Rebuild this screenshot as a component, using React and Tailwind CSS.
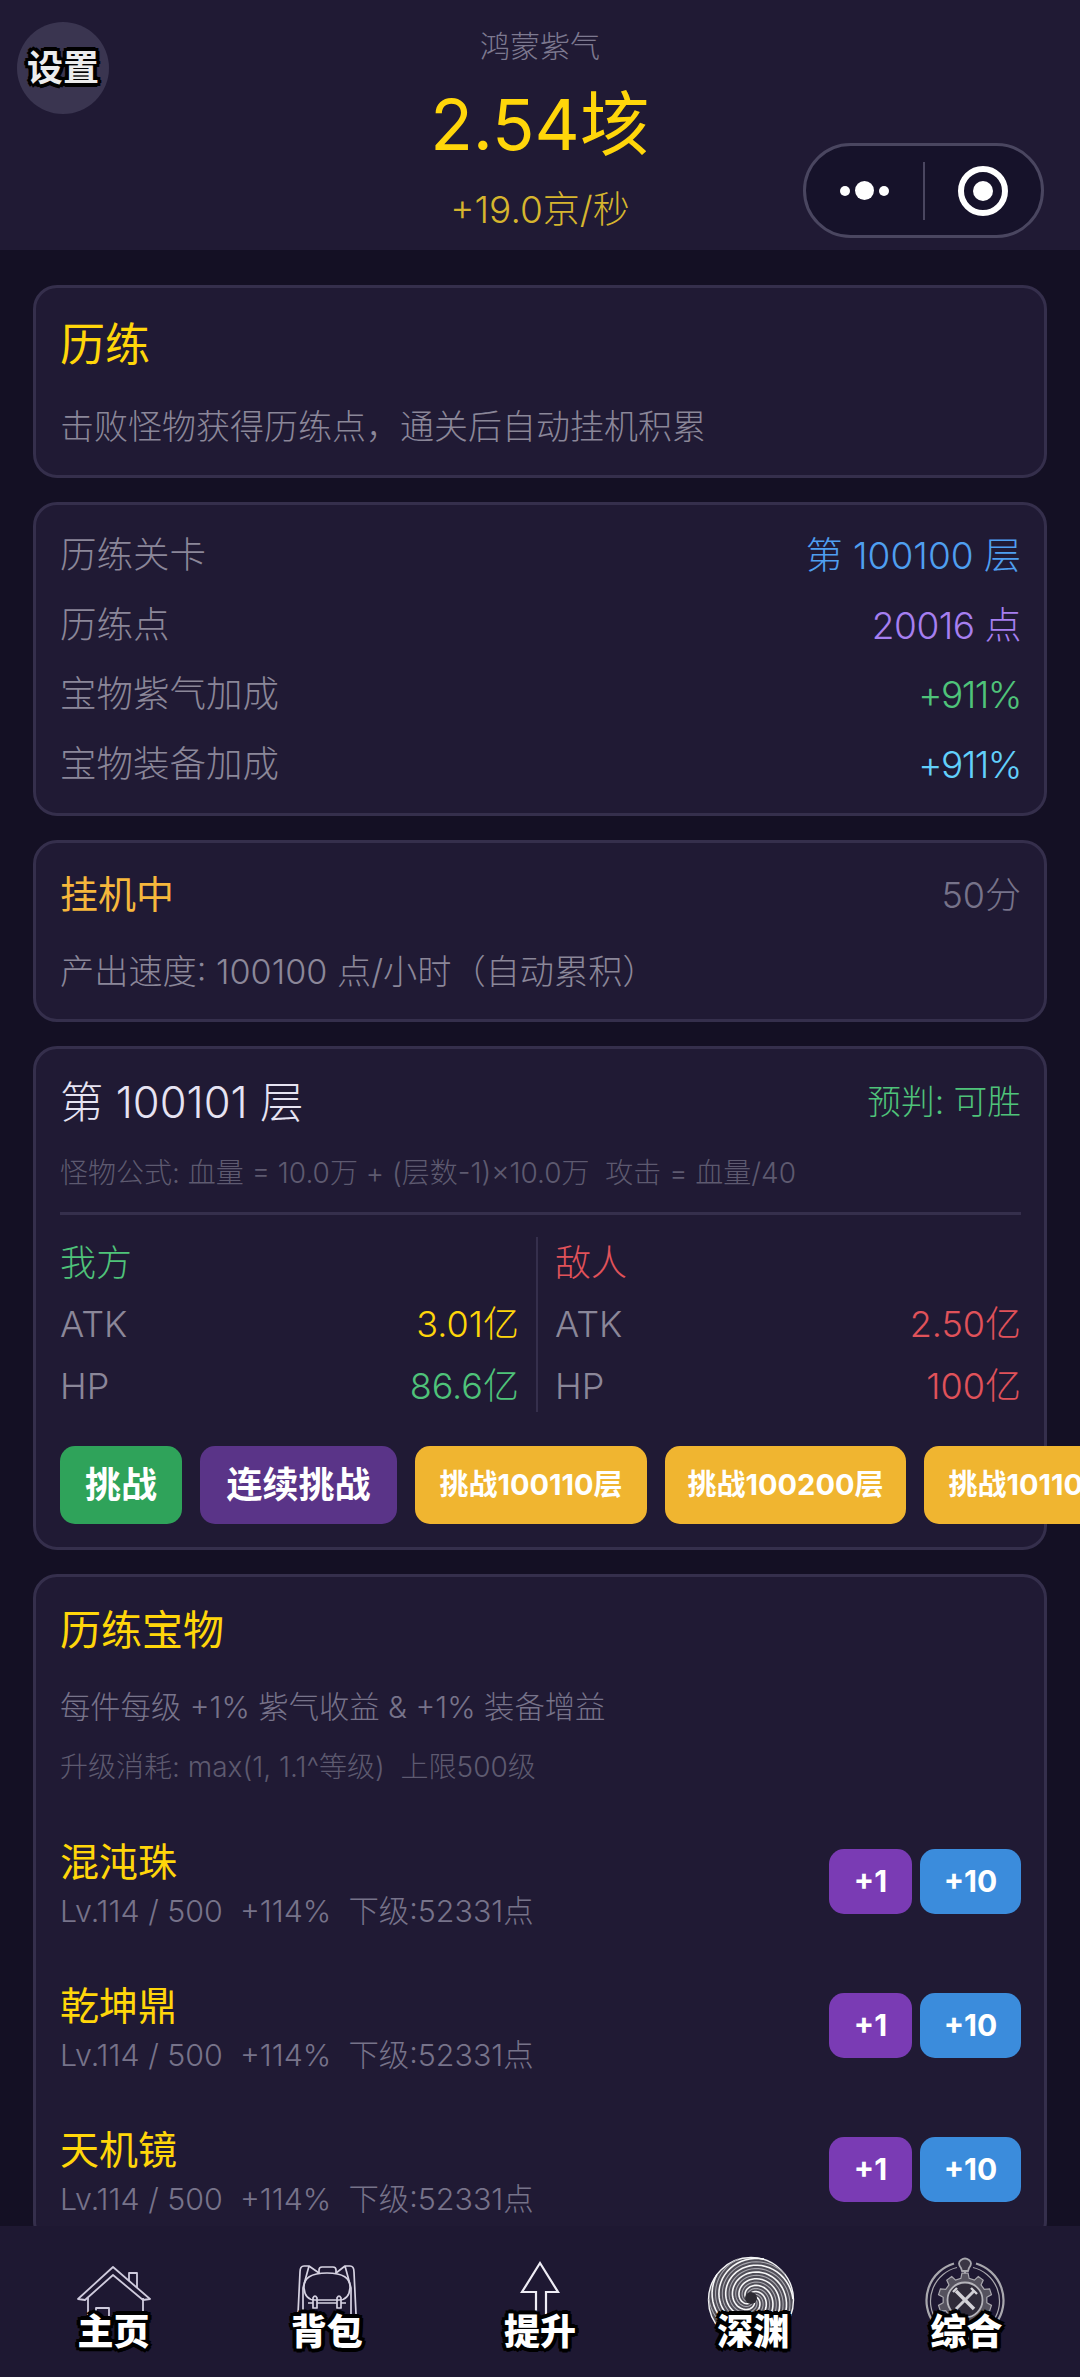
import React from "react";

const outline =
  "[text-shadow:3px_3px_0_#000,-3px_-3px_0_#000,3px_-3px_0_#000,-3px_3px_0_#000,4px_0_0_#000,-4px_0_0_#000,0_4px_0_#000,0_-4px_0_#000]";

function Card({ className = "", children }) {
  return (
    <section className={"mx-[33px] mb-[24px] rounded-[24px] border-[3px] border-[#352f4c] bg-[#201a34] " + className}>
      {children}
    </section>
  );
}

function StatRow({ label, value, color }) {
  return (
    <div className="flex h-[69.5px] items-center justify-between">
      <span className="text-[36.5px] font-light text-[#8b8799]">{label}</span>
      <span className={"text-[37px] font-light " + color}>{value}</span>
    </div>
  );
}

function VersusRow({ label, value, color }) {
  return (
    <div className="flex h-[62px] items-center justify-between">
      <span className="text-[36px] font-light text-[#8b8799]">{label}</span>
      <span className={"text-[36px] font-light " + color}>{value}</span>
    </div>
  );
}

function Treasure({ name }) {
  return (
    <div className="flex h-[144px] items-center justify-between">
      <div className="flex flex-col pt-[4px]">
        <span className="h-[54px] text-[39px] leading-[54px] font-normal text-[#ffd60a]">{name}</span>
        <span className="h-[44px] text-[30.4px] leading-[44px] font-light whitespace-pre text-[#77738a]">
          {"Lv.114 / 500  +114%  下级:52331点"}
        </span>
      </div>
      <div className="flex gap-[8px]">
        <button className="flex h-[65px] w-[83px] items-center justify-center rounded-[15px] bg-[#7a3bb4] text-[30px] font-bold text-white">+1</button>
        <button className="flex h-[65px] w-[101px] items-center justify-center rounded-[15px] bg-[#3b8cdc] text-[30px] font-bold text-white">+10</button>
      </div>
    </div>
  );
}

function HomeIcon() {
  return (
    <svg width="100" height="92" viewBox="0 0 100 92" fill="none" stroke="#cfcbdd" strokeWidth="1.8" strokeLinejoin="round">
      <path d="M49 11 L86 43 L79 44 L49 19 L21 44 L14 43 Z" />
      <path d="M65 25 V17 H73 V32" />
      <path d="M24 42 V70 M79 42 V70" />
      <path d="M32 60 V52 H45 V60 M56 60 A6.5 6.5 0 0 1 68 60" />
    </svg>
  );
}

function BagIcon() {
  return (
    <svg width="100" height="92" viewBox="0 0 100 92" fill="none" stroke="#d6d2e2" strokeWidth="1.7" strokeLinejoin="round">
      <path d="M42 17 V14 Q42 11 45 11 H56 Q59 11 59 14 V17" />
      <path d="M27 10 Q23 10 23 16 L21 58 M73 10 Q77 10 77 16 L79 58" />
      <path d="M27 10 H32 L42 17 M73 10 H68 L59 17 M32 10 L26 32 L26 58 M68 10 L74 32 L74 58" />
      <path d="M27 32 Q26 17 50 17 Q74 17 73 32 Q72 44 62 44 H38 Q28 44 27 32 Z" />
      <path d="M36 52 V42 Q38 38 40 42 V52 Z M60 52 V42 Q62 38 64 42 V52 Z" />
      <path d="M31 47 H36 M40 47 H60 M64 47 H69" />
    </svg>
  );
}

function ArrowIcon() {
  return (
    <svg width="100" height="92" viewBox="0 0 100 92" fill="none" stroke="#efedf5" strokeWidth="2.2" strokeLinejoin="miter">
      <path d="M50 7 L68 36 H56 V62 H46 V36 H32 Z" />
    </svg>
  );
}

function spiral(start, turns, r0, r1, cx, cy) {
  let d = "";
  const steps = 60;
  for (let i = 0; i <= steps; i++) {
    const t = i / steps;
    const a = start + t * turns * Math.PI * 2;
    const r = r0 + (r1 - r0) * t;
    d += (i === 0 ? "M" : "L") + (cx + r * Math.cos(a)).toFixed(2) + " " + (cy + r * Math.sin(a)).toFixed(2) + " ";
  }
  return d;
}

function VortexIcon() {
  const arms = Array.from({ length: 10 }, (_, i) => (i * Math.PI) / 5);
  return (
    <svg width="100" height="92" viewBox="0 0 100 92" fill="none">
      <circle cx="48" cy="44" r="42.5" fill="#4f4d57" stroke="#f2f2f4" strokeWidth="1.4" />
      {arms.map((a, i) => (
        <path key={i} d={spiral(a, 1.1, 4, 42, 48, 43)} stroke={i % 2 ? "#f7f7f8" : "#a9a8af"} strokeWidth={i % 2 ? 1.6 : 1.1} />
      ))}
      <circle cx="48" cy="42" r="6" fill="#2c2a32" />
    </svg>
  );
}

function gearPath(cx, cy, r1, r2, n) {
  let d = "";
  const step = (Math.PI * 2) / n;
  for (let i = 0; i < n; i++) {
    const a = i * step - Math.PI / 2;
    const pts = [
      [r1, a - step * 0.3],
      [r2, a - step * 0.18],
      [r2, a + step * 0.18],
      [r1, a + step * 0.3],
    ];
    pts.forEach(([r, t], j) => {
      d += (i === 0 && j === 0 ? "M" : "L") + (cx + r * Math.cos(t)).toFixed(2) + " " + (cy + r * Math.sin(t)).toFixed(2) + " ";
    });
  }
  return d + "Z";
}

function GearIcon() {
  return (
    <svg width="100" height="92" viewBox="0 0 100 92" fill="none" stroke="#a9a8ae">
      <path d="M38 7.5 A38.5 38.5 0 1 0 60 7.5" strokeWidth="2.2" />
      <path d="M41 11.5 A34.5 34.5 0 1 0 57 11.5" strokeWidth="1.2" />
      <path d="M46 15 L45 12 Q41 7 45 4 Q49 1 53 4 Q57 7 53 12 L52 15 Z" strokeWidth="1.8" fill="#3a3644" />
      <path d="M49 15 V19" strokeWidth="2" />
      <path d={gearPath(49, 44, 22, 27, 10)} fill="#55525e" strokeWidth="1.2" />
      <circle cx="49" cy="44" r="17.5" fill="#2f2b39" stroke="#b5b4ba" strokeWidth="1.8" />
      <path d="M40 35 L58 53" stroke="#d4d3d8" strokeWidth="3.6" />
      <path d="M58 35 L40 53" stroke="#cfced3" strokeWidth="3" />
      <path d="M37 36 L41 32 M55 32 L61 38" stroke="#d4d3d8" strokeWidth="2.4" />
    </svg>
  );
}

function NavItem({ icon, label }) {
  return (
    <div className="flex flex-1 flex-col items-center">
      <div className="flex h-[92px] items-start justify-center">{icon}</div>
      <span className={"-mt-[39px] text-[36px] leading-[46px] font-black text-white " + outline}>{label}</span>
    </div>
  );
}

export default function App() {
  return (
    <div className="relative flex h-[2377px] w-[1080px] flex-col overflow-hidden bg-[#141024] font-[Inter,'Noto_Sans_CJK_SC',sans-serif]">
      <header className="flex h-[250px] shrink-0 flex-col items-center bg-[#201a34] pt-[24px]">
        <div className="h-[44px] text-[30px] leading-[44px] font-light text-[#7d7990]">鸿蒙紫气</div>
        <div className="mt-[12px] h-[90px] text-[70px] leading-[90px] font-normal text-[#ffd60a]">2.54垓</div>
        <div className="mt-[15px] h-[50px] text-[37px] leading-[50px] font-light text-[#d6b52e]">+19.0京/秒</div>
      </header>

      <div className={"absolute top-[22px] left-[17px] flex h-[92px] w-[92px] items-center justify-center rounded-full bg-[#3a3550] text-[36px] font-bold text-[#ececec] " + outline}>
        设置
      </div>

      <div className="absolute top-[143px] left-[803px] flex h-[95px] w-[241px] items-center rounded-full border-[3px] border-[#4a4660] bg-[#16122a]">
        <div className="flex w-[117px] items-center justify-center gap-[5px]">
          <span className="h-[10px] w-[10px] rounded-full bg-white" />
          <span className="h-[19px] w-[19px] rounded-full bg-white" />
          <span className="h-[10px] w-[10px] rounded-full bg-white" />
        </div>
        <div className="h-[58px] w-[2px] bg-[#4a4660]" />
        <div className="flex flex-1 items-center justify-center">
          <span className="flex h-[50px] w-[50px] items-center justify-center rounded-full border-[6px] border-white">
            <span className="h-[20px] w-[20px] rounded-full bg-white" />
          </span>
        </div>
      </div>

      <main className="min-h-0 flex-1 overflow-hidden pt-[35px]">
        <Card className="h-[193px] pt-[27px] pr-[23px] pl-[24px]">
          <h1 className="h-[60px] text-[45px] leading-[60px] font-normal text-[#ffd60a]">历练</h1>
          <p className="mt-[28px] h-[48px] text-[34px] leading-[48px] font-light text-[#8b8799]">击败怪物获得历练点，通关后自动挂机积累</p>
        </Card>

        <Card className="pt-[16px] pr-[23px] pb-[14px] pl-[24px]">
          <StatRow label="历练关卡" value="第 100100 层" color="text-[#4f9ff0]" />
          <StatRow label="历练点" value="20016 点" color="tracking-[-0.5px] text-[#a67ff0]" />
          <StatRow label="宝物紫气加成" value="+911%" color="tracking-[-1.5px] text-[#4fc37a]" />
          <StatRow label="宝物装备加成" value="+911%" color="tracking-[-1.5px] text-[#62d0fb]" />
        </Card>

        <Card className="h-[182px] pt-[21.5px] pr-[23px] pl-[24px]">
          <div className="flex h-[60px] items-center justify-between">
            <span className="text-[38px] font-normal text-[#f6b73c]">挂机中</span>
            <span className="text-[36px] font-light text-[#77738a]">50分</span>
          </div>
          <p className="mt-[23.5px] h-[48px] text-[34.2px] leading-[48px] font-light text-[#8b8799]">产出速度: 100100 点/小时（自动累积）</p>
        </Card>

        <Card className="h-[504px] pt-[23.5px] pl-[24px]">
          <div className="mr-[23px] flex h-[60px] items-center justify-between">
            <span className="text-[43.5px] font-light text-[#e6e3f2]">第 100101 层</span>
            <span className="text-[33.7px] font-light text-[#4fc37a]">预判: 可胜</span>
          </div>
          <p className="mt-[20px] h-[40px] text-[28px] leading-[40px] font-light whitespace-pre text-[#5e5a70]">
            {"怪物公式: 血量 = 10.0万 + (层数-1)×10.0万  攻击 = 血量/40"}
          </p>
          <div className="mt-[19px] mr-[23px] h-[3px] bg-[#352f4c]" />
          <div className="mt-[22px] mr-[23px] flex h-[175px]">
            <div className="w-[478px] shrink-0 border-r-[2px] border-[#352f4c] pr-[17px]">
              <div className="mb-[4px] h-[52px] text-[36px] leading-[52px] font-light text-[#4fc37a]">我方</div>
              <VersusRow label="ATK" value="3.01亿" color="text-[#ffd60a]" />
              <VersusRow label="HP" value="86.6亿" color="text-[#4fc37a]" />
            </div>
            <div className="flex-1 pl-[17px]">
              <div className="mb-[4px] h-[52px] text-[36px] leading-[52px] font-light text-[#e0525a]">敌人</div>
              <VersusRow label="ATK" value="2.50亿" color="text-[#e0525a]" />
              <VersusRow label="HP" value="100亿" color="text-[#e0525a]" />
            </div>
          </div>
          <div className="mt-[34px] flex gap-[18px] whitespace-nowrap">
            <button className="h-[78px] w-[122px] shrink-0 rounded-[15px] bg-[#2fa35a] text-[36px] font-bold text-white">挑战</button>
            <button className="h-[78px] w-[197px] shrink-0 rounded-[15px] bg-[#5a3488] text-[36px] font-bold text-white">连续挑战</button>
            <button className="h-[78px] w-[232px] shrink-0 rounded-[15px] bg-[#f0b530] text-[29px] font-bold text-white">挑战100110层</button>
            <button className="h-[78px] w-[241px] shrink-0 rounded-[15px] bg-[#f0b530] text-[29px] font-bold text-white">挑战100200层</button>
            <button className="h-[78px] w-[232px] shrink-0 rounded-[15px] bg-[#f0b530] text-[29px] font-bold text-white">挑战101100层</button>
          </div>
        </Card>

        <Card className="pt-[22.5px] pr-[23px] pl-[24px]">
          <h2 className="h-[60px] text-[41px] leading-[60px] font-normal text-[#ffd60a]">历练宝物</h2>
          <p className="mt-[23px] h-[48px] text-[30.3px] leading-[48px] font-light text-[#77738a]">每件每级 +1% 紫气收益 &amp; +1% 装备增益</p>
          <p className="mt-[16px] h-[40px] text-[28px] leading-[40px] font-light whitespace-pre text-[#5e5a70]">
            {"升级消耗: max(1, 1.1^等级)  上限500级"}
          </p>
          <div className="mt-[23px]">
            <Treasure name="混沌珠" />
            <Treasure name="乾坤鼎" />
            <Treasure name="天机镜" />
          </div>
        </Card>
      </main>

      <nav className="flex h-[151px] shrink-0 items-start bg-[#1e1832] px-[7px] pt-[30px]">
        <NavItem icon={<HomeIcon />} label="主页" />
        <NavItem icon={<BagIcon />} label="背包" />
        <NavItem icon={<ArrowIcon />} label="提升" />
        <NavItem icon={<VortexIcon />} label="深渊" />
        <NavItem icon={<GearIcon />} label="综合" />
      </nav>
    </div>
  );
}
